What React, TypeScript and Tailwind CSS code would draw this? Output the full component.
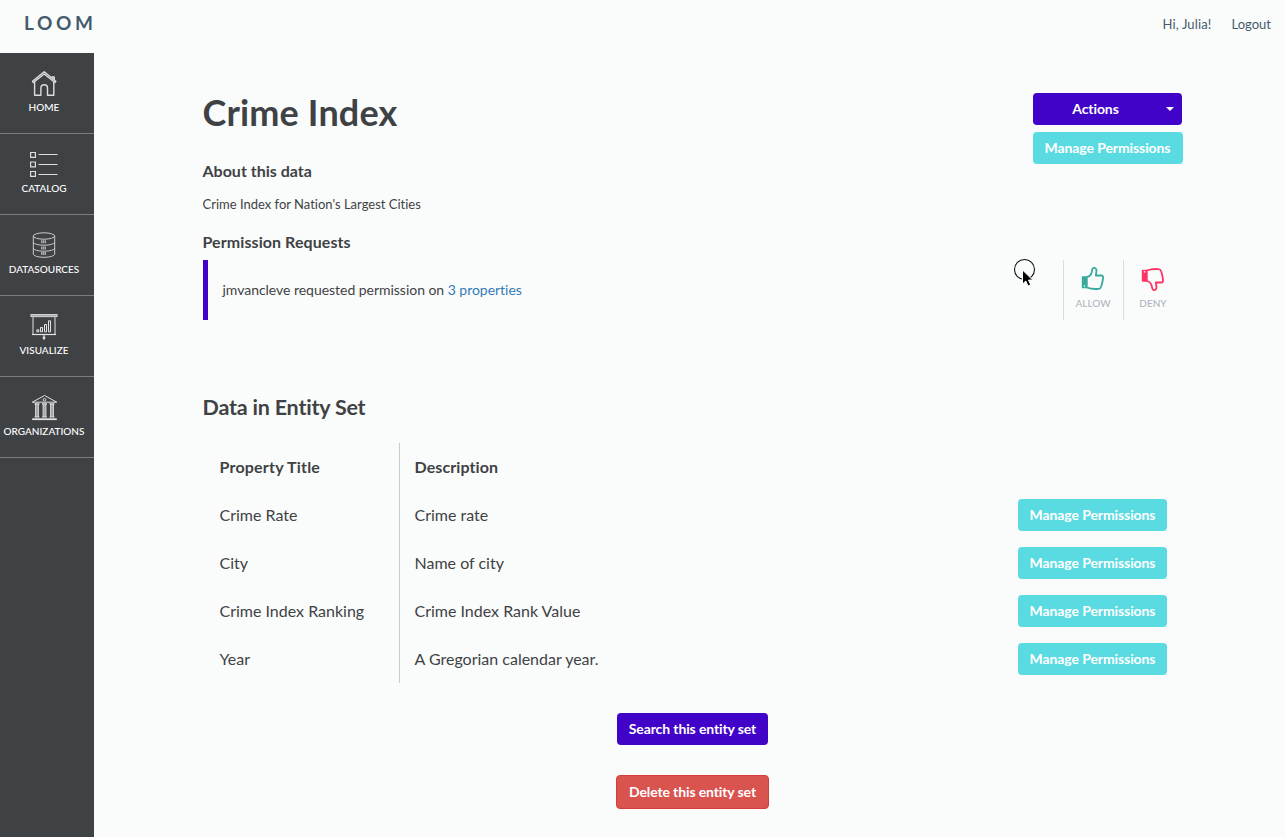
import type { ReactNode } from 'react';

function HomeIcon() {
  return (
    <svg width="28" height="28" viewBox="0 0 28 28" fill="none" stroke="#dcddde" strokeWidth="1.4" strokeLinejoin="round">
      <path d="M2.500 12.300 14.200 2.800l11.600 9.500-.9 1.200L14.200 5 3.400 13.500z" />
      <path d="M4.600 12.800v13.400h6.300v-7.100a3.300 3.300 0 0 1 6.600 0v7.100h6.300V12.800M22 9V8h2.200v3" />
    </svg>
  );
}

function CatalogIcon() {
  return (
    <svg width="28" height="28" viewBox="0 0 28 28" fill="none" stroke="#dcdde0">
      <path strokeWidth="1.200" d="M.6 2.500h4.800v4.800H.6zM.6 12h4.800v4.800H.6zM.6 21.500h4.800v4.800H.6z" />
      <path strokeWidth="1.200" d="M8.500 4.500H27.500M8.500 14.500H27.500M8.500 24.500H27.500" />
    </svg>
  );
}

function DatabaseIcon() {
  return (
    <svg width="28" height="28" viewBox="0 0 28 28" fill="none" stroke="#c9cbcd" strokeWidth="1">
      <ellipse cx="14" cy="5" rx="10.700" ry="3.200" />
      <path d="M3.300 5v18c0 1.800 4.800 3.300 10.700 3.300s10.700-1.500 10.700-3.300V5" />
      <path d="M3.300 11c0 1.800 4.800 3.200 10.700 3.200S24.700 12.800 24.700 11M3.300 17c0 1.800 4.800 3.200 10.700 3.200S24.700 18.800 24.700 17" />
      <path strokeWidth="3" strokeDasharray="1.400 .4" stroke="#a9abae" d="M11 10.800h5M11 17h5M11 22.500h5" />
    </svg>
  );
}

function VisualizeIcon() {
  return (
    <svg width="28" height="28" viewBox="0 0 28 28" fill="none" stroke="#e4e5e6">
      <path fill="#aeb0b2" strokeWidth=".8" d="M.8 2.500h26.400v2.200H.8z" />
      <path stroke="#909295" strokeWidth="2" d="M3 5v17.200M25 5v17.200" />
      <path strokeWidth="1.200" d="M2 22.500h24" />
      <path strokeWidth="1" d="M6.800 17.800h2v2h-2zM10.500 15.500h2v4.300h-2zM14.500 12.500h2v7.300h-2zM18.500 8.800h2v11h-2z" />
      <path strokeWidth="1" d="M14 22.500v5.300" />
      <circle cx="14" cy="25.800" r="1" fill="#e4e5e6" />
    </svg>
  );
}

function OrganizationIcon() {
  return (
    <svg width="28" height="28" viewBox="0 0 28 28" fill="none" stroke="#e0e1e2">
      <path strokeWidth="1" d="M2.200 9.200 14.500 2.500l12.300 6.700z" />
      <circle cx="14.500" cy="6.800" r="1.300" />
      <path stroke="#a5a7aa" strokeWidth="3" d="M7 11v13M14.500 11v13M22 11v13" />
      <path stroke="#e0e1e2" strokeWidth=".8" d="M5.500 11v13M8.500 11v13M13 11v13M16 11v13M20.500 11v13M23.500 11v13" />
      <path strokeWidth="1.200" d="M4.500 10.800h5M12 10.800h5M19.500 10.800h5M4.500 24h5M12 24h5M19.500 24h5" />
      <path strokeWidth="1.800" d="M2.200 26.200h24.600" />
    </svg>
  );
}

function ThumbIcon({ down = false }: { down?: boolean }) {
  return (
    <svg
      width="24"
      height="25"
      viewBox="0 0 24 25"
      className={down ? '-scale-y-100 text-[#ff3366]' : 'text-[#38a99d]'}
      fill="none"
      stroke="currentColor"
      strokeWidth="1.800"
      strokeLinejoin="round"
      strokeLinecap="round"
    >
      <path fill="currentColor" stroke="none" fillRule="evenodd" d="M2 10.300h3.800v12H2c-.8 0-1.200-.5-1.200-1.300v-9.400c0-.8.400-1.300 1.200-1.300zm1.500 9a.8.8 0 1 0 0 1.600.8.8 0 0 0 0-1.600z" />
      <path d="M5.800 11c2.900-.7 4.400-2.300 4.900-4.800.3-1.900.3-3.600 1.500-4.100 1.800-.7 3.400.6 3.300 2.700-.1 1.700-.6 3-.6 4.700h5.200c1.400 0 2.200.9 2 2.200-.3 3-.9 5.600-1.700 8.400-.4 1.600-1.300 2.500-2.900 2.700-4.200.5-8.300-.1-11.700-1.300z" />
    </svg>
  );
}

const navItems: { label: string; icon: ReactNode }[] = [
  { label: 'HOME', icon: <HomeIcon /> },
  { label: 'CATALOG', icon: <CatalogIcon /> },
  { label: 'DATASOURCES', icon: <DatabaseIcon /> },
  { label: 'VISUALIZE', icon: <VisualizeIcon /> },
  { label: 'ORGANIZATIONS', icon: <OrganizationIcon /> },
];

const properties = [
  { title: 'Crime Rate', description: 'Crime rate' },
  { title: 'City', description: 'Name of city' },
  { title: 'Crime Index Ranking', description: 'Crime Index Rank Value' },
  { title: 'Year', description: 'A Gregorian calendar year.' },
];

function ManageButton({ className }: { className: string }) {
  return (
    <button className={`h-8 shrink-0 rounded bg-[#5adbe1] text-sm font-bold tracking-[-0.1px] whitespace-nowrap text-white ${className}`}>
      Manage Permissions
    </button>
  );
}

function Pointer() {
  return (
    <svg className="absolute top-[258px] left-[1013px]" width="24" height="32" viewBox="0 0 24 32">
      <circle cx="11.500" cy="11.500" r="10" fill="none" stroke="#111" strokeWidth="1.100" />
      <path d="M9.500 12v14l3.300-3 2.200 5 2.700-1.200-2.200-4.700h4.300z" fill="#000" stroke="#fff" strokeWidth="1" />
    </svg>
  );
}

export default function App() {
  return (
    <div className="relative flex h-[837px] w-[1285px] flex-col overflow-hidden bg-[#fafcfb] font-['Lato',sans-serif] text-[#3f4245] [font-variant-ligatures:none]">
      <header className="flex h-[53px] shrink-0 justify-between pt-2 pr-3.5 pl-6 text-[#455a6b]">
        <div className="text-[19px] leading-[30px] font-bold tracking-[3.600px]">LOOM</div>
        <div className="flex gap-5 text-[13px] leading-8">
          <span className="tracking-[0.150px]">Hi, Julia!</span>
          <span>Logout</span>
        </div>
      </header>
      <div className="flex min-h-0 flex-1">
        <nav className="w-[94px] shrink-0 bg-[#3f4245]">
          {navItems.map((item) => (
            <a key={item.label} className="flex h-[81px] flex-col items-center border-b border-[#7a7d7f] pt-4 pr-1.5 text-white">
              {item.icon}
              <span className="mt-0.5 text-[10px] leading-4 font-medium">{item.label}</span>
            </a>
          ))}
        </nav>
        <main className="ml-[108.500px] flex w-[980px] flex-col">
          <div className="flex justify-between">
            <div>
              <h1 className="mt-[35px] text-[36px] leading-[48px] font-bold tracking-[0.150px]">Crime Index</h1>
              <h2 className="mt-[23px] text-base leading-6 font-bold">About this data</h2>
              <p className="mt-[11px] text-[13px] leading-5">Crime Index for Nation's Largest Cities</p>
              <h2 className="mt-4 text-base leading-6 font-bold tracking-[0.080px]">Permission Requests</h2>
            </div>
            <div className="mt-10 flex w-[150px] flex-col gap-[7px]">
              <button className="flex h-8 w-[149px] items-center rounded bg-[#4203c9] pr-2 text-sm font-bold tracking-[-0.100px] text-white">
                <span className="flex-1 pr-[7px]">Actions</span>
                <span className="border-x-4 border-t-4 border-x-transparent border-t-white" />
              </button>
              <ManageButton className="w-[150px]" />
            </div>
          </div>
          <section className="mt-1.5 flex h-[60px] items-center border-l-[5px] border-[#4203c9]">
            <p className="flex-1 pl-[15px] text-sm tracking-[-0.030px]">
              jmvancleve requested permission on <a className="text-[#337ab7]">3 properties</a>
            </p>
            <button className="flex h-[60px] w-[60px] flex-col items-center border-l border-[#d5dfdd] pt-1.5 text-[10px] leading-4 font-medium text-[#adb5bf]">
              <ThumbIcon />
              <span className="mt-1">ALLOW</span>
            </button>
            <button className="flex h-[60px] w-[60px] flex-col items-center border-l border-[#d5dfdd] pt-[7px] text-[10px] leading-4 font-medium text-[#adb5bf]">
              <ThumbIcon down />
              <span className="mt-[3px]">DENY</span>
            </button>
          </section>
          <h2 className="mt-[72px] text-[21.500px] leading-[30px] font-bold tracking-[-0.200px]">Data in Entity Set</h2>
          <div className="mt-[21px] text-base">
            <div className="flex h-12 items-center font-bold">
              <div className="w-[196px] pl-[17px] tracking-[0.200px]">Property Title</div>
              <div className="flex h-12 flex-1 items-center border-l border-[#c9cccb] pl-[15px] tracking-[0.100px]">Description</div>
            </div>
            {properties.map((property) => (
              <div key={property.title} className="flex h-12 items-center pr-[15.500px]">
                <div className="w-[196px] pl-[17px]">{property.title}</div>
                <div className="flex h-12 flex-1 items-center border-l border-[#c9cccb] pl-[15px]">{property.description}</div>
                <ManageButton className="w-[149px]" />
              </div>
            ))}
          </div>
          <div className="mt-[30px] flex flex-col items-center gap-[30px] text-sm font-bold tracking-[-0.120px] text-white">
            <button className="h-8 w-[151px] rounded bg-[#4203c9]">Search this entity set</button>
            <button className="h-[34px] w-[153px] rounded border border-[#d43f3a] bg-[#d9534f]">Delete this entity set</button>
          </div>
        </main>
      </div>
      <Pointer />
    </div>
  );
}
